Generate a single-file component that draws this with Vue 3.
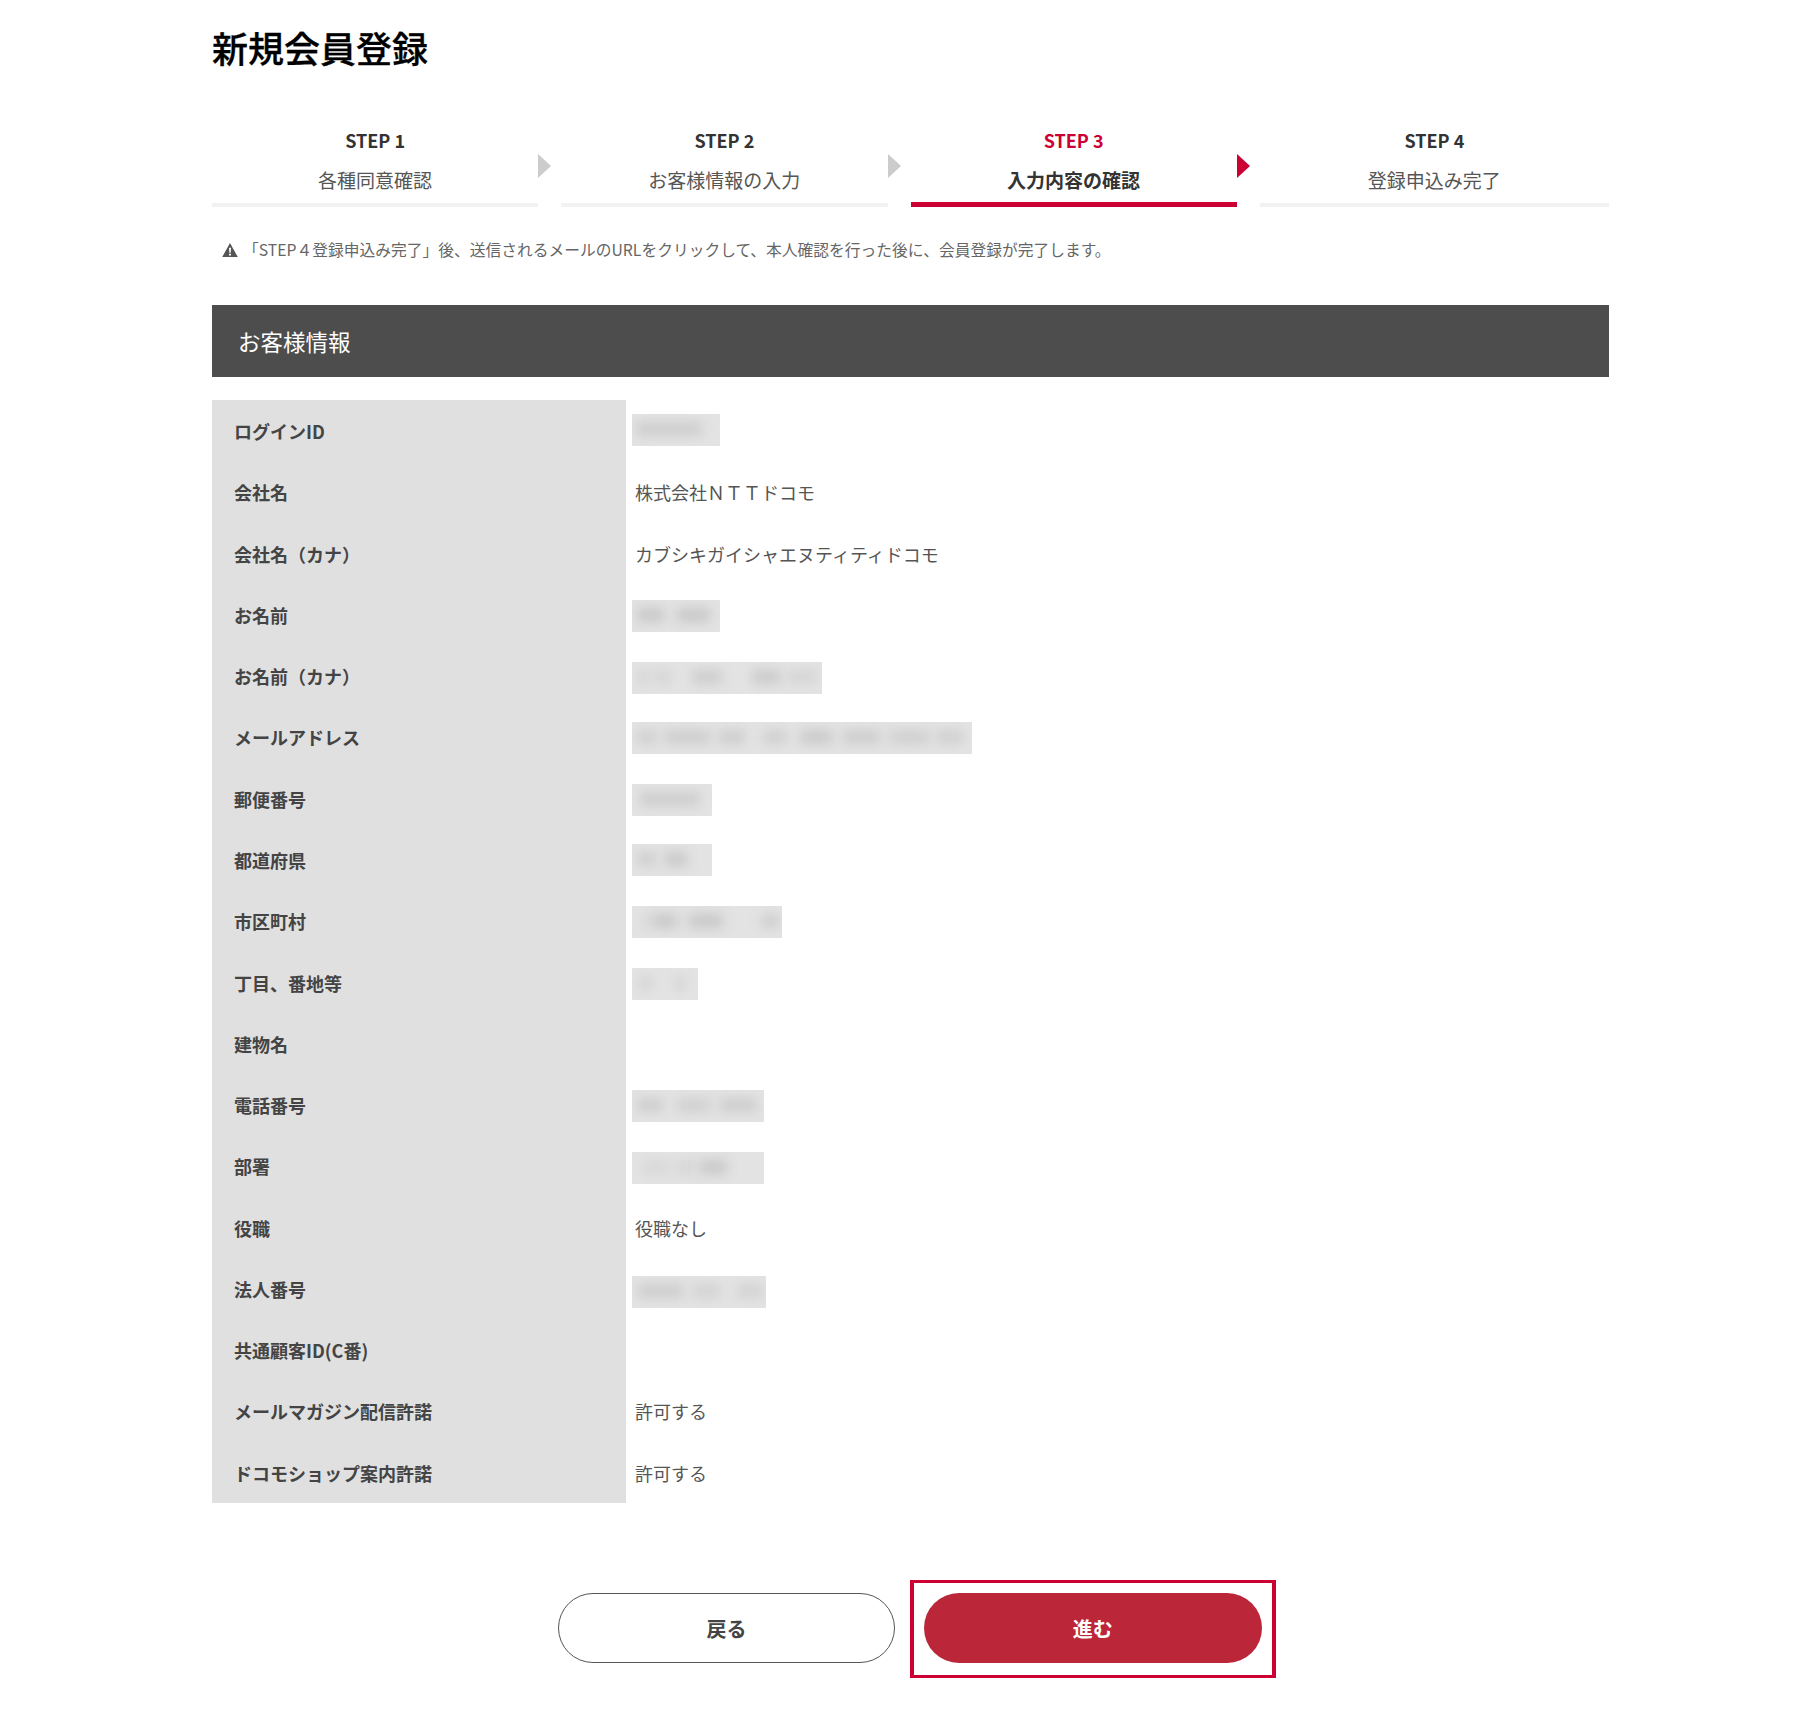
<script setup>
const steps = [
  { no: 'STEP 1', name: '各種同意確認' },
  { no: 'STEP 2', name: 'お客様情報の入力' },
  { no: 'STEP 3', name: '入力内容の確認', active: true },
  { no: 'STEP 4', name: '登録申込み完了', last: true },
]
const rows = [
  { label: 'ログインID', w: 88, dy: -0.6, blur: [[4, 66, 0.8]] },
  { label: '会社名', value: '株式会社ＮＴＴドコモ' },
  { label: '会社名（カナ）', value: 'カブシキガイシャエヌティティドコモ' },
  { label: 'お名前', w: 88, dy: 1.5, blur: [[5, 27, 1], [45, 33, 1]] },
  { label: 'お名前（カナ）', w: 190, dy: 2.2, blur: [[5, 13, 0.5], [25, 13, 0.6], [60, 30, 0.8], [120, 28, 0.9], [155, 30, 0.5]] },
  { label: 'メールアドレス', w: 340, dy: 1, blur: [[5, 20, 0.7], [33, 45, 0.8], [87, 26, 0.8], [131, 24, 0.7], [168, 33, 0.9], [211, 37, 0.8], [258, 40, 0.7], [305, 26, 0.7]] },
  { label: '郵便番号', w: 80, dy: 1.7, blur: [[8, 60, 0.8]] },
  { label: '都道府県', w: 80, dy: 0.4, blur: [[6, 17, 0.8], [33, 22, 1]] },
  { label: '市区町村', w: 150, dy: 1.1, blur: [[10, 10, 0.4], [21, 24, 1], [57, 34, 1], [130, 17, 0.8]] },
  { label: '丁目、番地等', w: 66, dy: 1.8, blur: [[8, 12, 0.6], [43, 10, 0.6]] },
  { label: '建物名' },
  { label: '電話番号', w: 132, dy: 1.3, blur: [[5, 26, 0.8], [45, 33, 0.7], [88, 37, 0.8]] },
  { label: '部署', w: 132, dy: 2, blur: [[10, 28, 0.4], [45, 18, 0.5], [68, 27, 1]] },
  { label: '役職', value: '役職なし' },
  { label: '法人番号', w: 134, dy: 3.4, blur: [[6, 45, 0.8], [61, 27, 0.6], [105, 26, 0.6]] },
  { label: '共通顧客ID(C番)' },
  { label: 'メールマガジン配信許諾', value: '許可する' },
  { label: 'ドコモショップ案内許諾', value: '許可する' },
]
</script>

<template>
  <main class="page">
    <h1 class="title">新規会員登録</h1>

    <ol class="steps">
      <li v-for="s in steps" :key="s.no" class="step" :class="{ active: s.active, last: s.last }">
        <div class="step-body">
          <p class="step-no">{{ s.no }}</p>
          <p class="step-name">{{ s.name }}</p>
        </div>
        <span v-if="!s.last" class="step-arrow"></span>
      </li>
    </ol>

    <p class="note">
      <svg class="note-icon" viewBox="0 0 16 15" aria-hidden="true">
        <path fill="#555" d="M8 .4 15.8 14.6H.2Z" />
        <path fill="#fff" d="M7 5.2h2l-.3 5H7.3ZM7 11.2h2v1.8H7Z" />
      </svg>
      <span>「STEP４登録申込み完了」後、送信されるメールのURLをクリックして、本人確認を行った後に、会員登録が完了します。</span>
    </p>

    <h2 class="band">お客様情報</h2>

    <dl class="info">
      <div v-for="r in rows" :key="r.label" class="row">
        <dt class="label">{{ r.label }}</dt>
        <dd class="value">
          <div v-if="r.w" class="mask" :style="{ width: r.w + 'px', marginTop: r.dy * 2 + 'px' }">
            <i
              v-for="(b, i) in r.blur"
              :key="i"
              class="smear"
              :style="{ left: b[0] + 'px', width: b[1] + 'px', opacity: b[2] }"
            ></i>
          </div>
          <span v-else-if="r.value" class="value-text">{{ r.value }}</span>
        </dd>
      </div>
    </dl>

    <div class="actions">
      <button class="btn back" type="button">戻る</button>
      <div class="next-wrap">
        <button class="btn next" type="button">進む</button>
        <span class="highlight"></span>
      </div>
    </div>
  </main>
</template>

<style>
html, body { background: #fff; }
</style>

<style scoped>
.page {
  box-sizing: border-box;
  width: 1397px;
  height: 1718px;
  margin-left: 212px;
  padding-top: 26px;
  font-family: "Noto Sans CJK JP", "Noto Sans", sans-serif;
  color: #444;
}
.title {
  margin: 0;
  font-size: 36px;
  line-height: 42px;
  font-weight: 500;
  color: #000;
  -webkit-text-stroke: 0.3px #000;
}
.steps {
  display: grid;
  grid-template-columns: repeat(4, 1fr);
  list-style: none;
  margin: 58px 0 0;
  padding: 0;
}
.step {
  position: relative;
  padding-right: 23px;
}
.step.last { padding-right: 0; }
.step-body {
  height: 77px;
  border-bottom: 4px solid #f2f2f2;
  text-align: center;
}
.step-no {
  margin: 0;
  font-size: 18px;
  line-height: 28px;
  font-weight: 700;
  color: #333;
}
.step-name {
  margin: 11px 0 0;
  font-size: 19px;
  line-height: 30px;
  color: #555;
}
.step-arrow {
  position: absolute;
  top: 28px;
  right: 10px;
  border-left: 13px solid #ccc;
  border-top: 12.5px solid transparent;
  border-bottom: 12.5px solid transparent;
}
.active .step-body {
  height: 76px;
  border-bottom: 5px solid #cc0033;
}
.active .step-no { color: #cc0033; }
.active .step-name { color: #333; font-weight: 700; }
.active .step-arrow { border-left-color: #cc0033; }
.note {
  display: flex;
  align-items: center;
  gap: 5px;
  margin: 30px 0 0;
  padding-left: 10px;
  font-size: 15.75px;
  line-height: 26px;
  color: #666;
}
.note-icon {
  width: 16px;
  height: 16px;
  flex: none;
}
.band {
  margin: 42px 0 0;
  height: 72px;
  padding-left: 26px;
  background: #4d4d4d;
  color: #fff;
  font-size: 22.5px;
  line-height: 72px;
  font-weight: 400;
}
.info {
  display: grid;
  grid-auto-rows: 61.28px;
  margin: 23px 0 0;
}
.row {
  display: grid;
  grid-template-columns: 414px 1fr;
}
.label {
  display: flex;
  align-items: center;
  padding: 1px 0 0 22px;
  background: #e0e0e0;
  font-size: 18px;
  font-weight: 700;
  color: #444;
}
.value {
  display: flex;
  align-items: center;
  margin: 0;
  padding-left: 6px;
  font-size: 18px;
  color: #555;
}
.value-text { padding: 1px 0 0 3px; }
.mask {
  position: relative;
  height: 32px;
  overflow: hidden;
  background: #e3e3e3;
}
.smear {
  position: absolute;
  top: 8px;
  height: 14px;
  background: #c8c8c8;
  filter: blur(6px);
}
.actions {
  display: flex;
  gap: 28.5px;
  margin: 90px 0 0 346px;
}
.btn {
  box-sizing: border-box;
  height: 70px;
  padding-top: 3px;
  border-radius: 35px;
  font-family: inherit;
  font-size: 20px;
  font-weight: 700;
  cursor: pointer;
}
.back {
  width: 337px;
  background: #fff;
  border: 1px solid #555;
  color: #444;
}
.next-wrap {
  position: relative;
  display: flex;
}
.next {
  width: 338.5px;
  background: #bb2739;
  border: 0;
  color: #fff;
}
.highlight {
  position: absolute;
  top: -13px;
  left: -13.5px;
  right: -14px;
  bottom: -15px;
  border: solid #cc0033;
  border-width: 3px 4px;
  pointer-events: none;
}
</style>
